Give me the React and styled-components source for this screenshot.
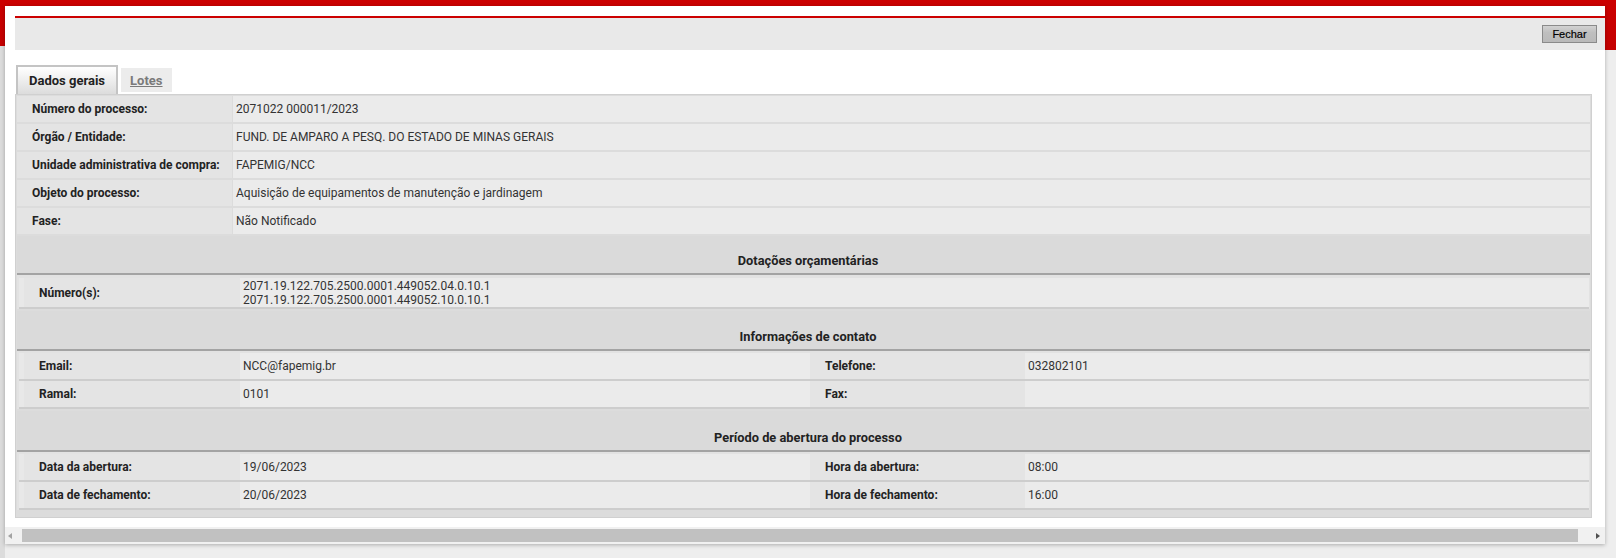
import React from "react";
import styled, { createGlobalStyle } from "styled-components";

const Global = createGlobalStyle`
  html, body { margin: 0; padding: 0; }
  body {
    background: linear-gradient(to bottom, #cc0000 0, #c40000 50px, #eeeeee 50px, #eeeeee 100%);
    font-family: Roboto, "Liberation Sans", Arial, sans-serif;
    height: 558px;
    overflow: hidden;
  }
`;

const Page = styled.div`
  display: flex;
  padding: 6px 11px 0 5px;
  height: 558px;
  box-sizing: border-box;
  background: linear-gradient(to right, #dcdcdc 0, #dcdcdc 5px, transparent 5px) no-repeat 0 46px / 100% 100%;
`;

const Dialog = styled.div`
  width: 1600px;
  height: 538px;
  background: #ffffff;
  box-shadow: 0 1px 4px rgba(0, 0, 0, 0.28);
  display: flex;
  flex-direction: column;
`;

const Content = styled.div`
  flex: 1;
  overflow: hidden;
  padding: 10px 0 0 10px;
  display: flex;
  flex-direction: column;
`;

const RedRule = styled.div`
  height: 2px;
  background: #cc0000;
`;

const Toolbar = styled.div`
  height: 32px;
  background: #e9e9e9;
  display: flex;
  align-items: center;
  justify-content: flex-end;
  padding-right: 8px;
`;

const CloseButton = styled.button`
  width: 55px;
  height: 18px;
  padding: 0;
  border: 1px solid #8a8a8a;
  background: linear-gradient(to bottom, #d2d2d2 0, #bfbfbf 40%, #b9b9b9 100%);
  font-family: "Liberation Sans", Arial, sans-serif;
  font-size: 11px;
  color: #000;
  -webkit-text-stroke: 0.2px #000;
  cursor: pointer;
`;

const Tabs = styled.div`
  display: flex;
  align-items: flex-start;
  gap: 3px;
  margin: 15px 0 0 1px;
  height: 29px;
`;

const Tab = styled.div`
  box-sizing: border-box;
  height: ${(p) => (p.$active ? "29px" : "24px")};
  margin-top: ${(p) => (p.$active ? "0" : "3px")};
  padding: 0 ${(p) => (p.$active ? "11px" : "9px")};
  display: flex;
  align-items: center;
  font-size: 13px;
  font-weight: 700;
  color: ${(p) => (p.$active ? "#222" : "#7a7a7a")};
  text-decoration: ${(p) => (p.$active ? "none" : "underline")};
  background: ${(p) =>
    p.$active ? "linear-gradient(to bottom, #ffffff 0, #f1f1f1 40%, #dcdcdc 100%)" : "#ececec"};
  border: ${(p) => (p.$active ? "2px solid #c4c4c4" : "none")};
  border-bottom: none;
`;

const Panel = styled.div`
  width: 1577px;
  box-sizing: border-box;
  background: #dcdcdc;
  border: 1px solid #d0d0d0;
  padding: 1px 1px 7px 1px;
  display: flex;
  flex-direction: column;
  gap: 2px;
`;

const FieldRow = styled.div`
  display: grid;
  grid-template-columns: 215px 1fr;
  gap: 1px;
  height: 26px;
`;

const Label = styled.div`
  background: #e4e4e4;
  display: flex;
  align-items: center;
  padding-left: 15px;
  font-size: 12px;
  font-weight: 700;
  color: #222;
`;

const Value = styled.div`
  background: #ebebeb;
  display: flex;
  flex-direction: column;
  justify-content: center;
  padding-left: 3px;
  font-size: 12px;
  color: #333;
  line-height: 14px;
`;

const SectionHeader = styled.div`
  height: ${(p) => p.$h || 38}px;
  box-sizing: border-box;
  border-bottom: 2px solid #a3a3a3;
  background: #dadada;
  display: flex;
  align-items: flex-end;
  justify-content: center;
  padding: 0 0 5px 9px;
  font-size: 12.8px;
  font-weight: 700;
  color: #222;
`;

const SubPanel = styled.div`
  padding: ${(p) => p.$pad || 2}px 1px 0 2px;
  margin-top: -2px;
  background: #e2e2e2;
  display: flex;
  flex-direction: column;
`;

const SubRow = styled.div`
  display: grid;
  grid-template-columns: ${(p) => (p.$quad ? "216px 570px 215px 1fr" : "216px 1fr")};
  height: ${(p) => p.$h || 26}px;
  padding-left: 5px;
  background: #e8e8e8;
  border-bottom: 2px solid #cdcdcd;
`;

const ScrollBar = styled.div`
  height: 17px;
  background: #f1f1f1;
  display: flex;
  align-items: flex-start;
`;

const ScrollArrow = styled.div`
  width: 17px;
  height: 17px;
  display: flex;
  align-items: center;
  justify-content: center;
  &::before {
    content: "";
    width: 0;
    height: 0;
    border-top: 3.5px solid transparent;
    border-bottom: 3.5px solid transparent;
    ${(p) =>
      p.$dir === "left"
        ? "border-right: 4px solid #a3a3a3; margin-left: -8px;"
        : "border-left: 4px solid #505050; margin-left: 2px;"}
  }
`;

const ScrollThumb = styled.div`
  flex: 1;
  height: 13px;
  margin: 2px 10px 0 0;
  background: #c1c1c1;
`;

const mainRows = [
  ["Número do processo:", "2071022 000011/2023"],
  ["Órgão / Entidade:", "FUND. DE AMPARO A PESQ. DO ESTADO DE MINAS GERAIS"],
  ["Unidade administrativa de compra:", "FAPEMIG/NCC"],
  ["Objeto do processo:", "Aquisição de equipamentos de manutenção e jardinagem"],
  ["Fase:", "Não Notificado"],
];

const contact = [
  ["Email:", "NCC@fapemig.br", "Telefone:", "032802101"],
  ["Ramal:", "0101", "Fax:", ""],
];

const period = [
  ["Data da abertura:", "19/06/2023", "Hora da abertura:", "08:00"],
  ["Data de fechamento:", "20/06/2023", "Hora de fechamento:", "16:00"],
];

function QuadRows({ rows }) {
  return rows.map((r) => (
    <SubRow $quad key={r[0]}>
      <Label>{r[0]}</Label>
      <Value>{r[1]}</Value>
      <Label>{r[2]}</Label>
      <Value>{r[3]}</Value>
    </SubRow>
  ));
}

export default function App() {
  return (
    <>
      <Global />
      <Page>
        <Dialog>
          <Content>
            <RedRule />
            <Toolbar>
              <CloseButton>Fechar</CloseButton>
            </Toolbar>
            <Tabs>
              <Tab $active>Dados gerais</Tab>
              <Tab>Lotes</Tab>
            </Tabs>
            <Panel>
              {mainRows.map(([l, v]) => (
                <FieldRow key={l}>
                  <Label>{l}</Label>
                  <Value>{v}</Value>
                </FieldRow>
              ))}
              <SectionHeader $h={39}>Dotações orçamentárias</SectionHeader>
              <SubPanel $pad={3}>
                <SubRow $h={29}>
                  <Label>Número(s):</Label>
                  <Value>
                    <span>2071.19.122.705.2500.0001.449052.04.0.10.1</span>
                    <span>2071.19.122.705.2500.0001.449052.10.0.10.1</span>
                  </Value>
                </SubRow>
              </SubPanel>
              <SectionHeader $h={40}>Informações de contato</SectionHeader>
              <SubPanel $pad={2}>
                <QuadRows rows={contact} />
              </SubPanel>
              <SectionHeader $h={41}>Período de abertura do processo</SectionHeader>
              <SubPanel $pad={2}>
                <QuadRows rows={period} />
              </SubPanel>
            </Panel>
          </Content>
          <ScrollBar>
            <ScrollArrow $dir="left" />
            <ScrollThumb />
            <ScrollArrow $dir="right" />
          </ScrollBar>
        </Dialog>
      </Page>
    </>
  );
}
